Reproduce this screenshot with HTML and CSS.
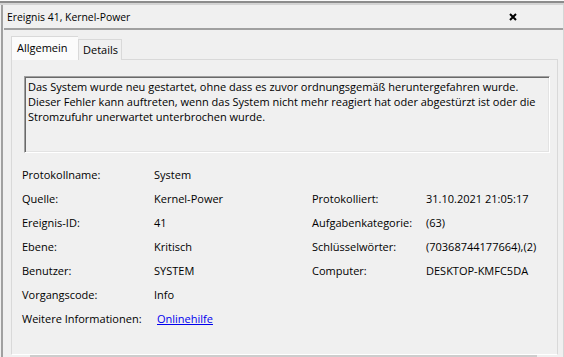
FILE: index.html
```html
<!DOCTYPE html>
<html lang="de">
<head>
  <meta charset="UTF-8" />
  <title>Ereignis 41, Kernel-Power</title>
  <link rel="stylesheet" href="styles.css">
</head>
<body>
  <div class="top-edge"></div>
  <div class="window">
    <div class="title-bar">
      <span class="title">Ereignis 41, Kernel-Power</span>
      <svg class="close" width="8" height="8" viewBox="0 0 8 8">
        <path d="M1 1 L7 7 M7 1 L1 7" stroke="#000" stroke-width="2" fill="none" />
      </svg>
    </div>

    <div class="tabs">
      <div class="tab active">Allgemein</div>
      <div class="tab details">Details</div>
    </div>

    <div class="panel">
      <div class="description">
        Das System wurde neu gestartet, ohne dass es zuvor ordnungsgemäß heruntergefahren wurde.
        Dieser Fehler kann auftreten, wenn das System nicht mehr reagiert hat oder abgestürzt ist oder die
        Stromzufuhr unerwartet unterbrochen wurde.
      </div>

      <div class="fields">
        <div class="label">Protokollname:</div>
        <div class="value">System</div>
        <div></div>
        <div></div>

        <div class="label">Quelle:</div>
        <div class="value">Kernel-Power</div>
        <div class="label">Protokolliert:</div>
        <div class="value">31.10.2021 21:05:17</div>

        <div class="label">Ereignis-ID:</div>
        <div class="value">41</div>
        <div class="label">Aufgabenkategorie:</div>
        <div class="value">(63)</div>

        <div class="label">Ebene:</div>
        <div class="value">Kritisch</div>
        <div class="label">Schlüsselwörter:</div>
        <div class="value">(70368744177664),(2)</div>

        <div class="label">Benutzer:</div>
        <div class="value">SYSTEM</div>
        <div class="label">Computer:</div>
        <div class="value">DESKTOP-KMFC5DA</div>

        <div class="label">Vorgangscode:</div>
        <div class="value">Info</div>
        <div></div>
        <div></div>

        <div class="label">Weitere Informationen:</div>
        <div class="value"><a class="link" href="#">Onlinehilfe</a></div>
      </div>
    </div>

    <div class="scrollbar"></div>
  </div>
</body>
</html>
```

FILE: styles.css
```css
body {
  margin: 0;
  width: 564px;
  height: 357px;
  overflow: hidden;
  background: #f0f0f0;
  color: #000;
  font-family: "Open Sans", "Noto Sans", sans-serif;
  font-size: 11px;
}
.top-edge {
  height: 2px;
  border-top: 1px solid #fafafa;
  border-bottom: 2px solid #d4d4d4;
  background: #8c8c8c;
}
.window {
  margin-left: 1px;
  height: 352px;
  border-left: 2px solid #a0a0a0;
  border-right: 1px solid #d6d6d6;
}
.title-bar {
  margin-left: 1px;
  height: 23px;
  padding: 0 0 0 3px;
  display: flex;
  align-items: center;
  justify-content: space-between;
  border-bottom: 2px solid #a0a0a0;
}
.title {
  font-size: 10.4px;
  padding-top: 1px;
}
.close {
  margin-right: 46px;
  margin-top: 1px;
}
.tabs {
  display: flex;
  align-items: flex-end;
  padding-left: 8px;
  margin-top: 6px;
  margin-bottom: -1px;
  position: relative;
}
.tab {
  height: 20px;
  line-height: 20px;
  border: 1px solid #d9d9d9;
  border-bottom: none;
  background: #f0f0f0;
}
.tab.active {
  width: 61px;
  height: 23px;
  line-height: 22px;
  padding-left: 5px;
  background: #fbfbfb;
  border-right: none;
}
.tab.details {
  width: 38px;
  padding-left: 4px;
}
.panel {
  margin: 0 5px 0 8px;
  height: 278px;
  padding: 16px 7px 0 12px;
  border: 1px solid #d9d9d9;
  border-bottom-color: #fff;
}
.description {
  height: 71px;
  padding: 2px 3px;
  line-height: 15px;
  border: 1px solid;
  border-color: #a0a0a0 #fff #fff #a0a0a0;
  box-shadow: inset 1px 1px 0 #696969, inset -1px -1px 0 #e3e3e3;
}
.fields {
  display: grid;
  grid-template-columns: 132px 158px 114px auto;
  grid-auto-rows: 24px;
  align-items: center;
  margin: 9px 0 0 -2px;
}
.link {
  padding-left: 3px;
  color: #0000ee;
}
.scrollbar {
  margin-left: 27px;
  width: 507px;
  height: 4px;
  background: #cdcdcd;
}
```
